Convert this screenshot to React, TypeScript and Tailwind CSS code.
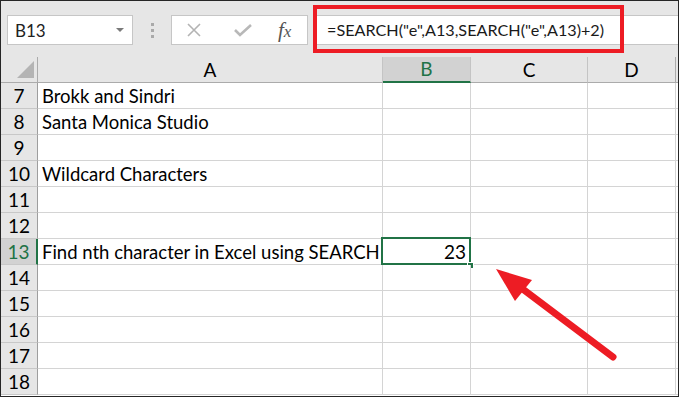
import React from 'react';

const rows: { n: number; a?: string; b?: string }[] = [
  { n: 7, a: 'Brokk and Sindri' },
  { n: 8, a: 'Santa Monica Studio' },
  { n: 9 },
  { n: 10, a: 'Wildcard Characters' },
  { n: 11 },
  { n: 12 },
  { n: 13, a: 'Find nth character in Excel using SEARCH', b: '23' },
  { n: 14 },
  { n: 15 },
  { n: 16 },
  { n: 17 },
  { n: 18 },
];

const gridCols = 'grid grid-cols-[37px_345px_88px_117px_88px_1fr] grid-rows-[26px]';
const font = "font-['Lato','Open_Sans',sans-serif]";

export default function App() {
  return (
    <div className={`relative w-[679px] h-[397px] overflow-hidden border border-[#262626] bg-[#e6e6e6] ${font} text-black`}>
      {/* Formula bar */}
      <div className="h-[56px] flex items-start pt-[14px] pl-[6px]">
        <div className="w-[126px] h-[30px] bg-white border border-[#c6c6c6] flex items-center justify-between pl-[7px] pr-[8px]">
          <span className="text-[17px] leading-none text-[#222]">B13</span>
          <span className="w-0 h-0 border-l-[4px] border-r-[4px] border-t-[4px] border-l-transparent border-r-transparent border-t-[#7a7a7a]" />
        </div>
        <div className="w-[38px] h-[30px] flex flex-col items-center justify-center gap-[3px]">
          <span className="w-[3px] h-[3px] bg-[#a9a9a9]" />
          <span className="w-[3px] h-[3px] bg-[#a9a9a9]" />
          <span className="w-[3px] h-[3px] bg-[#a9a9a9]" />
        </div>
        <div className="w-[137px] h-[30px] bg-white border border-[#c6c6c6] flex items-center">
          <svg width="16" height="16" viewBox="0 0 16 16" className="ml-[14px]">
            <path d="M2 2 L14 14 M14 2 L2 14" stroke="#b3b3b3" strokeWidth="1.6" fill="none" />
          </svg>
          <svg width="20" height="14" viewBox="0 0 20 14" className="ml-[31px]">
            <path d="M2 7 L7 12 L18 2" stroke="#b8b8b8" strokeWidth="2.6" fill="none" />
          </svg>
          <span className="ml-[25px] text-[21px] italic font-['Liberation_Serif',serif] text-[#555] leading-none">
            f<span className="text-[17px]">x</span>
          </span>
        </div>
        <div className="ml-[5px] flex-1 h-[30px] bg-white border border-[#c6c6c6] border-r-0 flex items-center pl-[13px]">
          <span className="text-[16.2px] leading-none text-[#1a1a1a] whitespace-nowrap">=SEARCH("e",A13,SEARCH("e",A13)+2)</span>
        </div>
      </div>

      {/* Column headers */}
      <div className={`${gridCols} h-[26px] text-[19px] leading-[24px]`}>
        <div className="border-r border-b border-[#ababab] flex items-end justify-end pr-[3px] pb-[4px]">
          <svg width="17" height="17" viewBox="0 0 17 17">
            <polygon points="0,17 17,17 17,0" fill="#b4b4b4" />
          </svg>
        </div>
        <div className="border-r border-r-[#c4c4c4] border-b border-b-[#ababab] flex items-center justify-center">A</div>
        <div className="bg-[#d2d2d2] border-r border-r-[#c4c4c4] border-b-2 border-b-[#217346] flex items-center justify-center text-[#217346]">B</div>
        <div className="border-r border-r-[#c4c4c4] border-b border-b-[#ababab] flex items-center justify-center">C</div>
        <div className="border-r border-r-[#ababab] border-b border-b-[#ababab] flex items-center justify-center">D</div>
        <div className="border-b border-[#ababab]" />
      </div>

      {/* Rows */}
      {rows.map((r) => {
        const sel = r.n === 13;
        return (
          <div key={r.n} className={`${gridCols} h-[26px] text-[19px] leading-[24px]`}>
            <div
              className={`flex items-center justify-center border-b border-b-[#c8c8c8] ${
                sel ? 'bg-[#d2d2d2] text-[#217346] border-r-2 border-r-[#217346]' : 'border-r border-r-[#9e9e9e]'
              }`}
            >
              {r.n}
            </div>
            <div className="bg-white border-r border-b border-[#d4d4d4] flex items-center pl-[4px] whitespace-nowrap text-[18.5px]">
              {r.a}
            </div>
            <div className="relative bg-white border-r border-b border-[#d4d4d4] flex items-center justify-end pr-[4px]">
              {r.b}
              {sel && (
                <>
                  <div className="absolute left-[-2px] top-[-2px] w-[90px] h-[28px] border-2 border-[#217346]" />
                  <div className="absolute left-[84px] top-[23px] w-[7px] h-[7px] bg-[#217346] border border-white" />
                </>
              )}
            </div>
            <div className="bg-white border-r border-b border-[#d4d4d4]" />
            <div className="bg-white border-r border-b border-[#d4d4d4]" />
            <div className="bg-white border-b border-[#d4d4d4]" />
          </div>
        );
      })}
      <div className="bg-white h-[4px]" />

      {/* Annotations */}
      <div className="absolute left-[312px] top-[4px] w-[311px] h-[48px] border-[4px] border-[#ed1c24]" />
      <svg className="absolute left-0 top-0" width="677" height="395" viewBox="0 0 677 395">
        <line x1="612" y1="356" x2="515" y2="283" stroke="#ed1c24" strokeWidth="7" strokeLinecap="round" />
        <polygon points="495,268 531,279 514,300" fill="#ed1c24" />
      </svg>
    </div>
  );
}
